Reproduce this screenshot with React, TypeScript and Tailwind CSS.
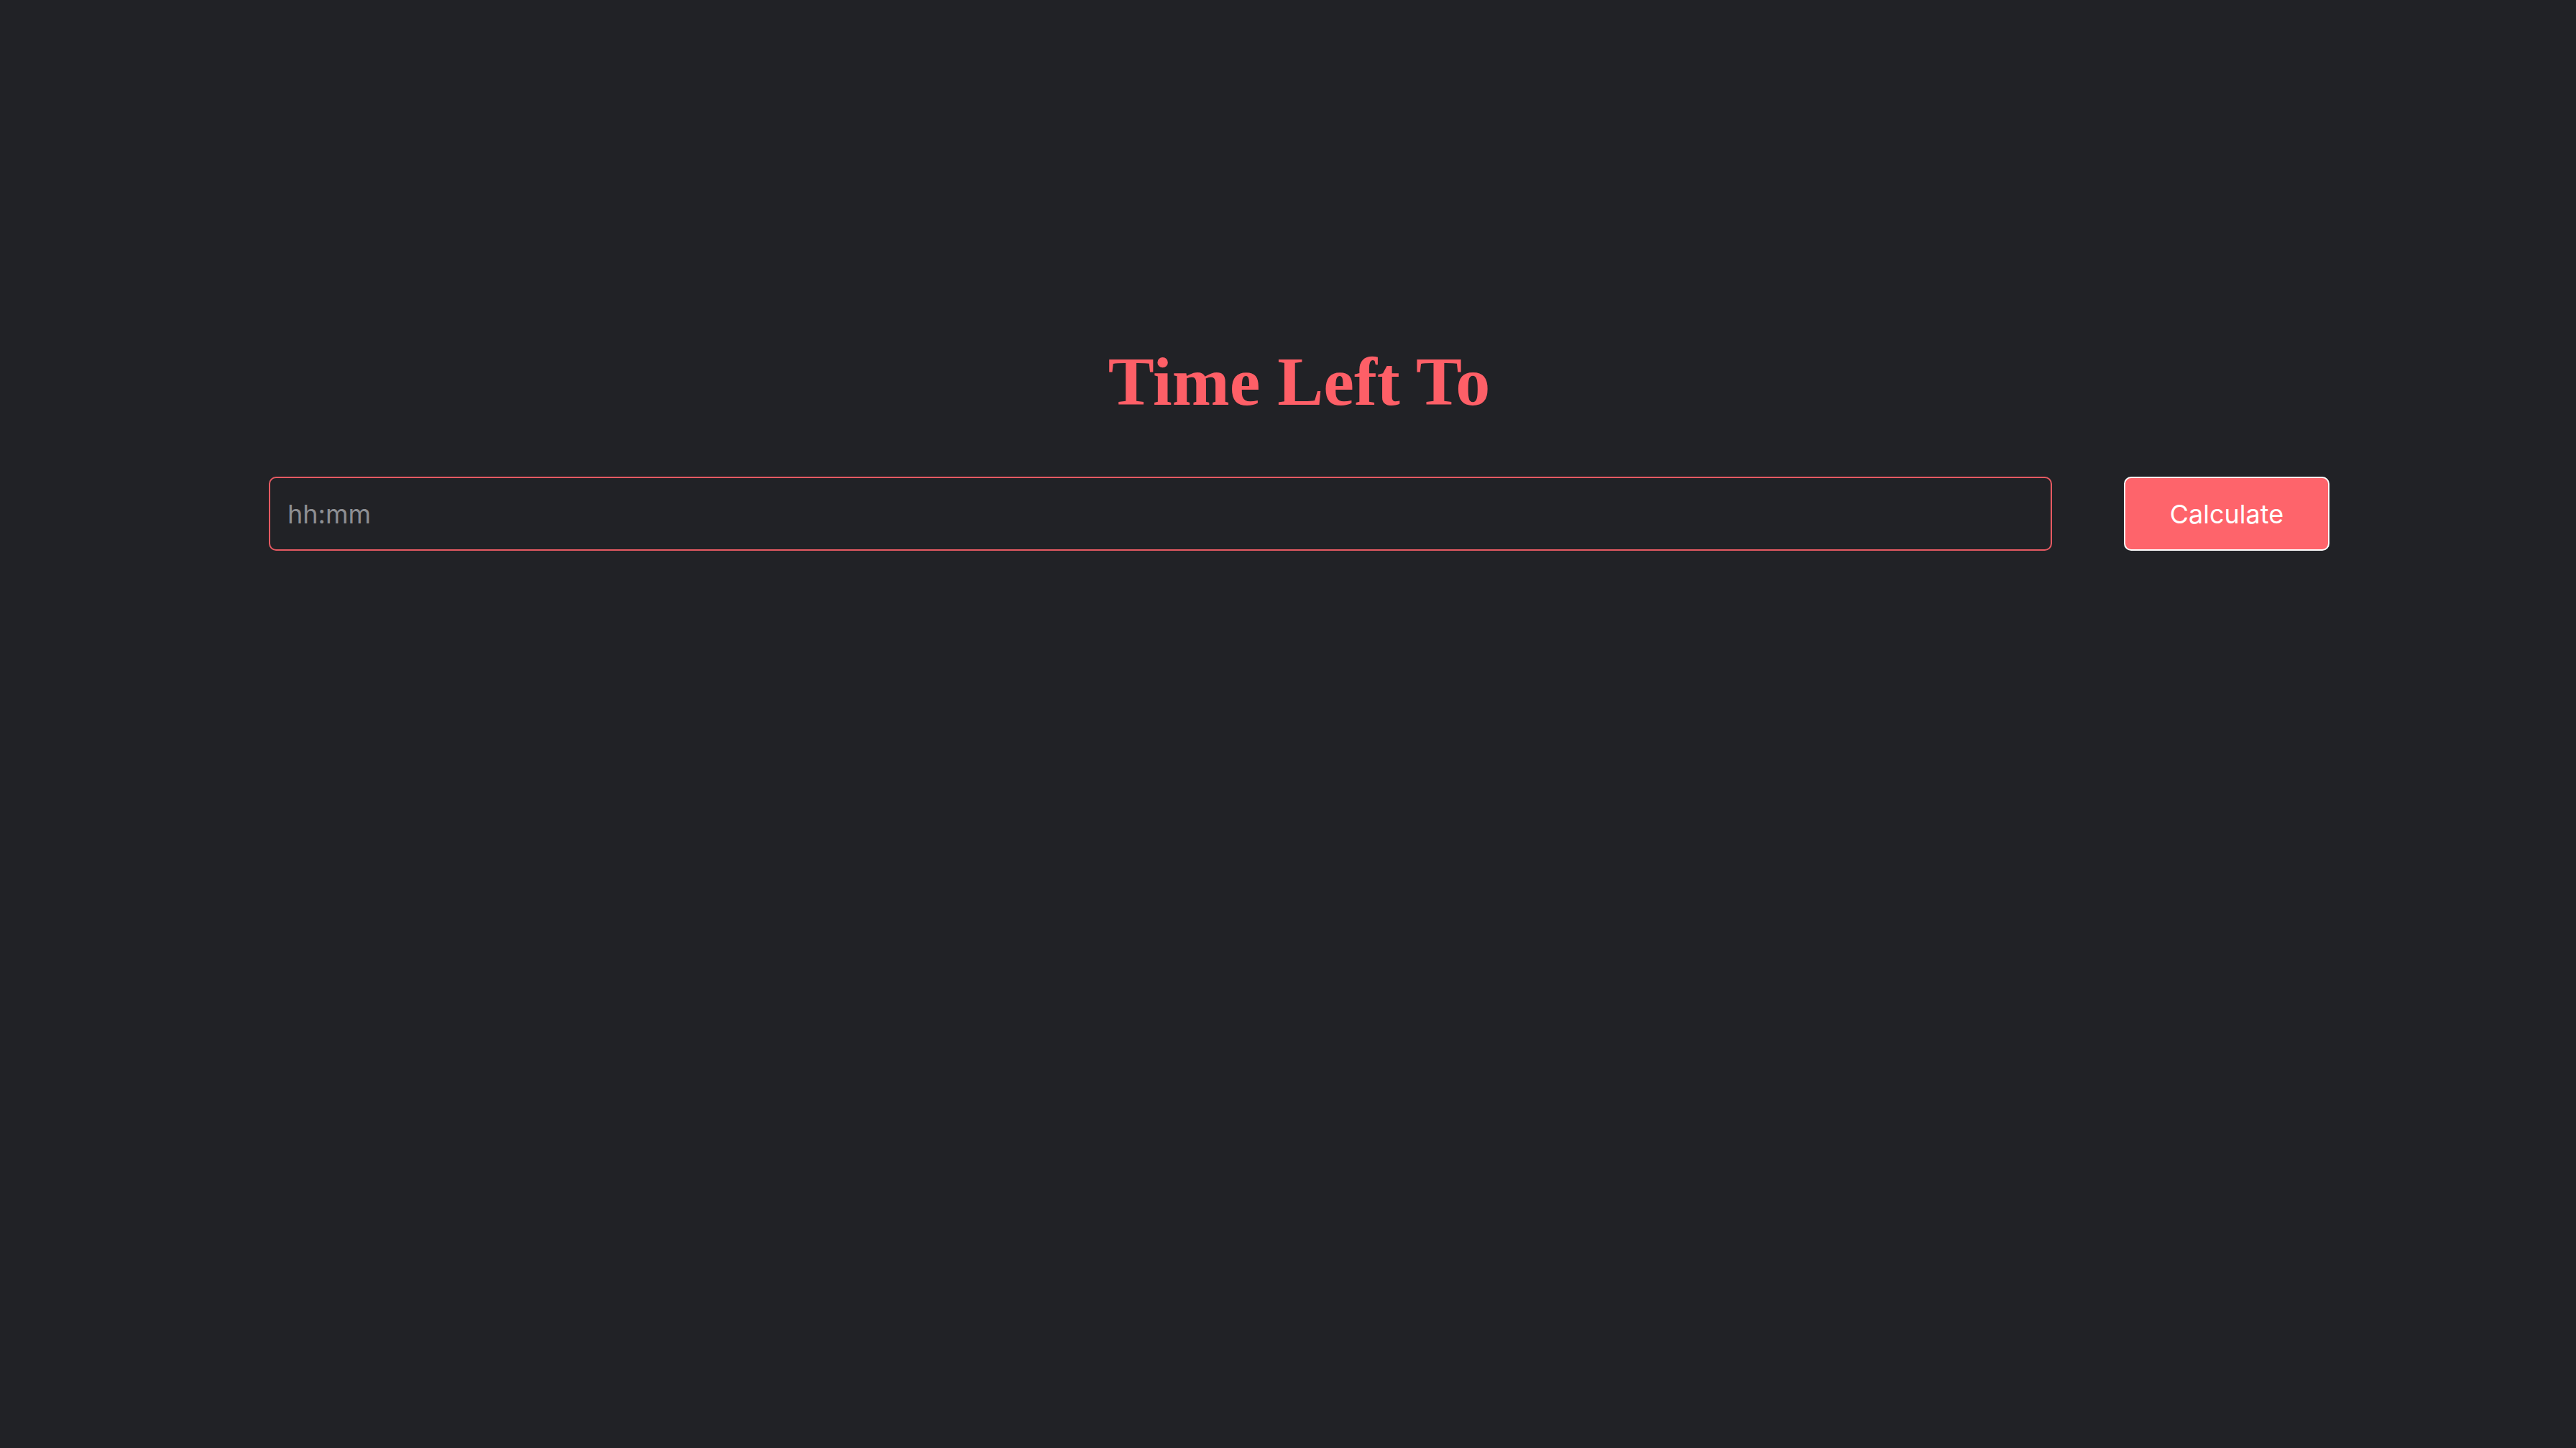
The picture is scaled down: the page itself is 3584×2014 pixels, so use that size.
import { useState } from "react";

export default function App() {
  const [time, setTime] = useState("");

  return (
    <div className="min-h-screen w-full bg-[#212226] pt-[483px]">
      <div className="ml-[374px] mr-[343px]">
        <h1 className="text-center font-['Liberation_Serif',serif] text-[96px] font-bold leading-none text-[#fe5f67]">
          Time Left To
        </h1>

        <div className="mt-[84px] flex items-center gap-[100px]">
          <input
            type="text"
            value={time}
            onChange={(e) => setTime(e.target.value)}
            placeholder="hh:mm"
            className="h-[103px] flex-1 rounded-[10px] border-2 border-[#e65a62] bg-transparent px-[24px] font-['Inter',sans-serif] text-[36px] text-white outline-none placeholder:text-[#8d8e92]"
          />
          <button
            type="button"
            className="h-[103px] w-[286px] rounded-[10px] border-2 border-white bg-[#fe646b] font-['Inter',sans-serif] text-[36px] text-white"
          >
            Calculate
          </button>
        </div>
      </div>
    </div>
  );
}
